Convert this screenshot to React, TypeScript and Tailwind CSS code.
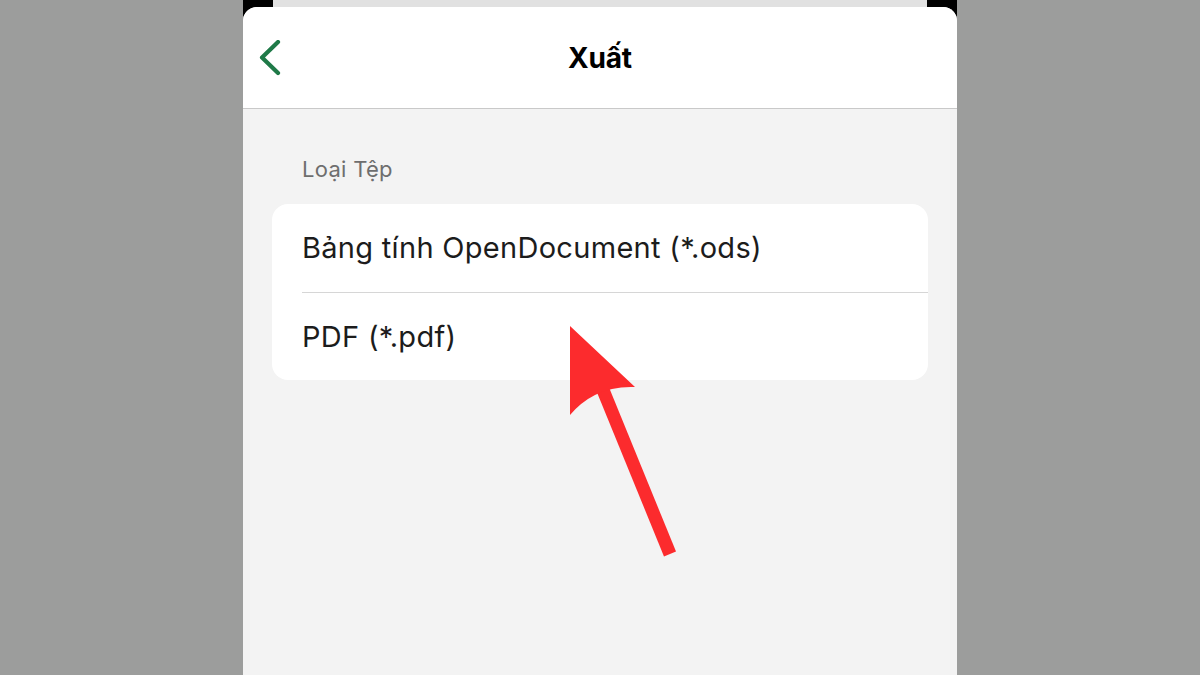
export default function App() {
  return (
    <div className="flex h-[675px] w-[1200px] justify-center overflow-hidden bg-[#9c9d9c]">
      <div className="relative flex w-[714px] flex-col bg-black">
        {/* card peeking behind the sheet */}
        <div className="mx-[30px] h-[7px] shrink-0 bg-[#e1e1e1]" />

        {/* sheet */}
        <div className="flex flex-1 flex-col overflow-hidden rounded-t-[14px] bg-[#f3f3f3]">
          {/* Header */}
          <div className="relative flex h-[102px] shrink-0 items-center justify-center border-b border-[#c9c9c9] bg-white">
            <button className="absolute left-[15px] top-[33px] p-0">
              <svg width="24" height="36" viewBox="0 0 24 36" fill="none">
                <path d="M20 2 L4 17.5 L20 33" stroke="#1f7a48" strokeWidth="4.2" strokeLinecap="round" strokeLinejoin="round" />
              </svg>
            </button>
            <h1 className="font-['Inter',sans-serif] text-[28px] font-bold tracking-[-0.2px] text-black">
              Xuất
            </h1>
          </div>

          {/* Content */}
          <div className="px-[29px] pt-[46px]">
            <p className="pl-[30px] font-['Inter',sans-serif] text-[22px] leading-[28px] tracking-[0.3px] text-[#6e6e6e]">
              Loại Tệp
            </p>
            <div className="mt-[21px] overflow-hidden rounded-[16px] bg-white">
              <div className="flex h-[88px] items-center pl-[30px] font-['Inter',sans-serif] text-[29px] tracking-[0.3px] text-[#1c1c1c]">
                Bảng tính OpenDocument (*.ods)
              </div>
              <div className="ml-[30px] h-px bg-[#d6d6d6]" />
              <div className="flex h-[87px] items-center pl-[30px] font-['Inter',sans-serif] text-[29px] tracking-[0.3px] text-[#1c1c1c]">
                PDF (*.pdf)
              </div>
            </div>
          </div>
        </div>

        {/* red annotation arrow */}
        <svg
          className="pointer-events-none absolute left-0 top-0"
          width="714"
          height="675"
          viewBox="0 0 714 675"
        >
          <line x1="358" y1="385" x2="427" y2="554" stroke="#fc2b2d" strokeWidth="13" />
          <path d="M327 326 L392 387 Q370 386 352 395 Q338 402 327 415 Z" fill="#fc2b2d" />
        </svg>
      </div>
    </div>
  );
}
